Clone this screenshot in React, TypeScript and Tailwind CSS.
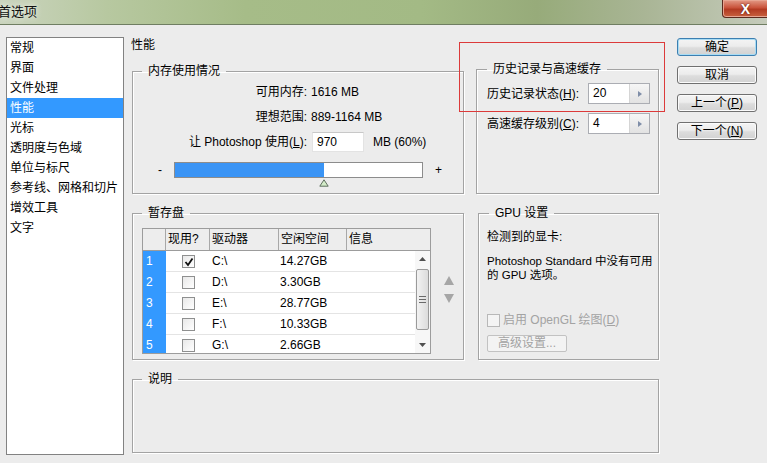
import React from 'react';

const FONT = "font-['Liberation_Sans','Noto_Sans_CJK_SC',sans-serif]";

function Group({
  legend,
  className,
  legendClass,
  children,
}: {
  legend: React.ReactNode;
  className: string;
  legendClass?: string;
  children?: React.ReactNode;
}) {
  return (
    <fieldset className={`border border-[#a3a3a3] shadow-[inset_1px_1px_0_#ffffff,1px_1px_0_#ffffff] ${className}`}>
      <legend className={`px-[6px] leading-[16px] ${legendClass ?? 'ml-[9px]'}`}>{legend}</legend>
      {children}
    </fieldset>
  );
}

function SpinBox({ value }: { value: string }) {
  return (
    <div className="flex h-[21px] w-[62px] border border-[#abadb3] bg-white">
      <div className="flex-1 pl-[4px] leading-[19px]">{value}</div>
      <div className="flex w-[20px] items-center justify-center border-l border-[#d5d5d5] bg-[linear-gradient(#f6f6f6,#e2e2e2)]">
        <svg width="4" height="6" viewBox="0 0 4 6">
          <path d="M0 0 L4 3 L0 6 Z" fill="#7f8ea8" />
        </svg>
      </div>
    </div>
  );
}

function Btn({ children, def }: { children: React.ReactNode; def?: boolean }) {
  return (
    <div
      className={`h-[18px] w-[80px] rounded-[3px] border text-center leading-[16px] bg-[linear-gradient(#f4f4f4,#ececec_45%,#dddddd_55%,#d2d2d2)] ${
        def ? 'border-[#3c7fb1] shadow-[inset_0_0_0_1px_#a8dcf4]' : 'border-[#707070] shadow-[inset_0_0_0_1px_#fbfbfb]'
      }`}
    >
      {children}
    </div>
  );
}

function CheckBox({ checked, disabled }: { checked?: boolean; disabled?: boolean }) {
  return (
    <div
      className={`relative h-[13px] w-[13px] border ${
        disabled ? 'border-[#b8b8b8] bg-[#f4f4f4]' : 'border-[#8e8f8f] bg-[linear-gradient(135deg,#e8e8e8,#ffffff)]'
      }`}
    >
      {checked && (
        <svg className="absolute left-[1px] top-[1px]" width="10" height="10" viewBox="0 0 10 10">
          <path d="M1.5 5 L4 8 L8.5 1.5" stroke="#111" strokeWidth="1.8" fill="none" />
        </svg>
      )}
    </div>
  );
}

const items = ['常规', '界面', '文件处理', '性能', '光标', '透明度与色域', '单位与标尺', '参考线、网格和切片', '增效工具', '文字'];

const disks = [
  ['1', true, 'C:\\', '14.27GB'],
  ['2', false, 'D:\\', '3.30GB'],
  ['3', false, 'E:\\', '28.77GB'],
  ['4', false, 'F:\\', '10.33GB'],
  ['5', false, 'G:\\', '2.66GB'],
] as const;

export default function App() {
  return (
    <div className={`relative h-[463px] w-[767px] overflow-hidden bg-[#ececec] text-[12px] text-black ${FONT}`}>
      {/* Title bar */}
      <div className="flex h-[25px] items-start border-b border-[#6f7e62] bg-[linear-gradient(90deg,#cad4be_0%,#b7c8a0_14%,#a6bc88_32%,#a3ba85_55%,#97ab7a_70%,#a9b595_84%,#c5cbbb_100%)]">
        <div className="-ml-[2px] pt-[4px] text-[13px] leading-[16px] text-[#101010] [text-shadow:0_0_6px_#ffffff]">首选项</div>
        <div className="ml-auto -mr-[2px] flex h-[18px] w-[47px] items-center justify-center rounded-bl-[4px] border border-t-0 border-[#5b2a1e] bg-[linear-gradient(#e39a86,#c9533b_45%,#b23a22_55%,#c8623f)] shadow-[inset_0_0_0_1px_#e7a592]">
          <span className="text-[14px] font-bold leading-[14px] text-white [text-shadow:0_0_2px_#4a1208]">X</span>
        </div>
      </div>

      {/* Body */}
      <div className="flex pl-[6px] pt-[12px]">
        {/* Category list */}
        <div className="h-[418px] w-[118px] border border-[#828282] bg-white">
          {items.map((it, i) => (
            <div
              key={it}
              className={`h-[20px] pl-[3px] leading-[20px] ${i === 3 ? 'bg-[#3399ff] text-white' : ''}`}
            >
              {it}
            </div>
          ))}
        </div>

        {/* Main column */}
        <div className="ml-[8px] flex w-[527px] flex-col">
          <div className="-ml-[1px] h-[16px] leading-[16px]">性能</div>

          {/* Row 1 */}
          <div className="mt-[8px] flex items-end">
            <Group legend="内存使用情况" className="h-[131px] w-[332px]">
              <div className="flex h-[25px] items-center">
                <span className="w-[174px] text-right">可用内存:</span>
                <span className="ml-[4px]">1616 MB</span>
              </div>
              <div className="flex h-[25px] items-center">
                <span className="w-[174px] text-right">理想范围:</span>
                <span className="ml-[4px]">889-1164 MB</span>
              </div>
              <div className="flex h-[25px] items-center">
                <span className="w-[174px] text-right">
                  让 Photoshop 使用(<span className="underline">L</span>):
                </span>
                <div className="ml-[5px] h-[20px] w-[52px] border border-[#e3e3e3] border-t-[#c8c8c8] bg-white pl-[4px] leading-[18px]">
                  970
                </div>
                <span className="ml-[9px]">MB (60%)</span>
              </div>
              <div className="mt-[8px] flex h-[16px] items-center">
                <span className="w-[41px] pl-[25px] leading-[16px]">-</span>
                <div className="relative h-[16px] w-[249px] border border-[#8c8c8c] bg-white">
                  <div className="h-full w-[149px] bg-[#3a94f5]" />
                  <svg className="absolute left-[144px] top-[16px]" width="10" height="8" viewBox="0 0 10 8">
                    <path d="M5 0.8 L9.2 7.2 L0.8 7.2 Z" fill="#d3ecc8" stroke="#5f6f5f" strokeWidth="1" />
                  </svg>
                </div>
                <span className="ml-[12px] leading-[16px]">+</span>
              </div>
            </Group>

            <Group legend="历史记录与高速缓存" legendClass="ml-[10px]" className="ml-[12px] h-[133px] w-[183px]">
              <div className="pl-[10px] pt-[6px]">
                <div className="flex h-[21px] items-center">
                  <span className="w-[101px]">
                    历史记录状态(<span className="underline">H</span>):
                  </span>
                  <SpinBox value="20" />
                </div>
                <div className="mt-[9px] flex h-[21px] items-center">
                  <span className="w-[101px]">
                    高速缓存级别(<span className="underline">C</span>):
                  </span>
                  <SpinBox value="4" />
                </div>
              </div>
            </Group>
          </div>

          {/* Row 2 */}
          <div className="mt-[11px] flex">
            <Group legend="暂存盘" className="h-[155px] w-[332px]">
              <div className="flex pl-[9px] pt-[7px]">
                <div className="w-[289px] border border-[#9c9c9c]">
                  <div className="flex h-[22px] border-b border-[#9c9c9c] bg-[#ededed] leading-[21px]">
                    <div className="w-[23px] border-r border-[#a8a8a8]" />
                    <div className="w-[44px] border-r border-[#a8a8a8] pl-[2px]">现用?</div>
                    <div className="w-[69px] border-r border-[#a8a8a8] pl-[2px]">驱动器</div>
                    <div className="w-[68px] border-r border-[#a8a8a8] pl-[2px]">空闲空间</div>
                    <div className="flex-1 pl-[2px]">信息</div>
                  </div>
                  <div className="flex h-[102px] bg-white">
                    <div className="flex-1 overflow-hidden">
                      {disks.map(([n, c, d, f]) => (
                        <div key={n} className="flex h-[21px]">
                          <div className="w-[23px] bg-[#3399ff] pl-[3px] leading-[21px] text-white">{n}</div>
                          <div className="flex flex-1 items-center border-b border-[#e4e4e4]">
                            <div className="flex w-[44px] justify-center pl-[1px]">
                              <CheckBox checked={c} />
                            </div>
                            <div className="w-[69px] pl-[2px]">{d}</div>
                            <div className="w-[68px] pl-[1px]">{f}</div>
                          </div>
                        </div>
                      ))}
                    </div>
                    {/* scrollbar */}
                    <div className="flex w-[15px] flex-col items-center bg-[#f7f7f7]">
                      <div className="flex h-[16px] items-center justify-center">
                        <svg width="7" height="4" viewBox="0 0 7 4">
                          <path d="M3.5 0 L7 4 L0 4 Z" fill="#505050" />
                        </svg>
                      </div>
                      <div className="mt-[2px] flex h-[61px] w-[13px] flex-col items-center justify-center gap-[2px] rounded-[2px] border border-[#9a9a9a] bg-[linear-gradient(90deg,#f2f2f2,#dcdcdc)]">
                        <div className="h-px w-[7px] bg-[#6a6a6a]" />
                        <div className="h-px w-[7px] bg-[#6a6a6a]" />
                        <div className="h-px w-[7px] bg-[#6a6a6a]" />
                      </div>
                      <div className="mt-auto flex h-[16px] items-center justify-center">
                        <svg width="7" height="4" viewBox="0 0 7 4">
                          <path d="M0 0 L7 0 L3.5 4 Z" fill="#505050" />
                        </svg>
                      </div>
                    </div>
                  </div>
                </div>
                <div className="ml-[13px] mt-[48px] flex flex-col items-center gap-[9px]">
                  <svg width="10" height="9" viewBox="0 0 10 9">
                    <path d="M5 0 L10 9 L0 9 Z" fill="#a6a6a6" />
                  </svg>
                  <svg width="10" height="9" viewBox="0 0 10 9">
                    <path d="M0 0 L10 0 L5 9 Z" fill="#a6a6a6" />
                  </svg>
                </div>
              </div>
            </Group>

            <Group legend="GPU 设置" legendClass="ml-[10px]" className="ml-[14px] h-[155px] w-[181px]">
              <div className="pl-[8px]">
                <div className="mt-[8px] leading-[16px]">检测到的显卡:</div>
                <div className="mt-[9px] text-[11.5px] leading-[14px]">
                  Photoshop Standard 中没有可用
                  <br />
                  的 GPU 选项。
                </div>
                <div className="mt-[30px] flex h-[16px] items-center text-[#a3a3a3]">
                  <CheckBox disabled />
                  <span className="ml-[3px]">
                    启用 OpenGL 绘图(<span className="underline">D</span>)
                  </span>
                </div>
                <div className="mt-[7px] h-[17px] w-[80px] rounded-[2px] border border-[#c2c2c2] bg-[#f3f3f3] text-center leading-[15px] text-[#a3a3a3]">
                  高级设置...
                </div>
              </div>
            </Group>
          </div>

          {/* Row 3 */}
          <div className="mt-[11px]">
            <Group legend="说明" className="h-[82px] w-[527px]" />
          </div>
        </div>

        {/* Buttons */}
        <div className="ml-[18px] flex flex-col gap-[10px] pt-[1px]">
          <Btn def>确定</Btn>
          <Btn>取消</Btn>
          <Btn>
            上一个(<span className="underline">P</span>)
          </Btn>
          <Btn>
            下一个(<span className="underline">N</span>)
          </Btn>
        </div>
      </div>

      {/* annotation rectangle */}
      <div className="pointer-events-none absolute left-[459px] top-[42px] h-[70px] w-[206px] border border-[#dc3a3a]" />
    </div>
  );
}
